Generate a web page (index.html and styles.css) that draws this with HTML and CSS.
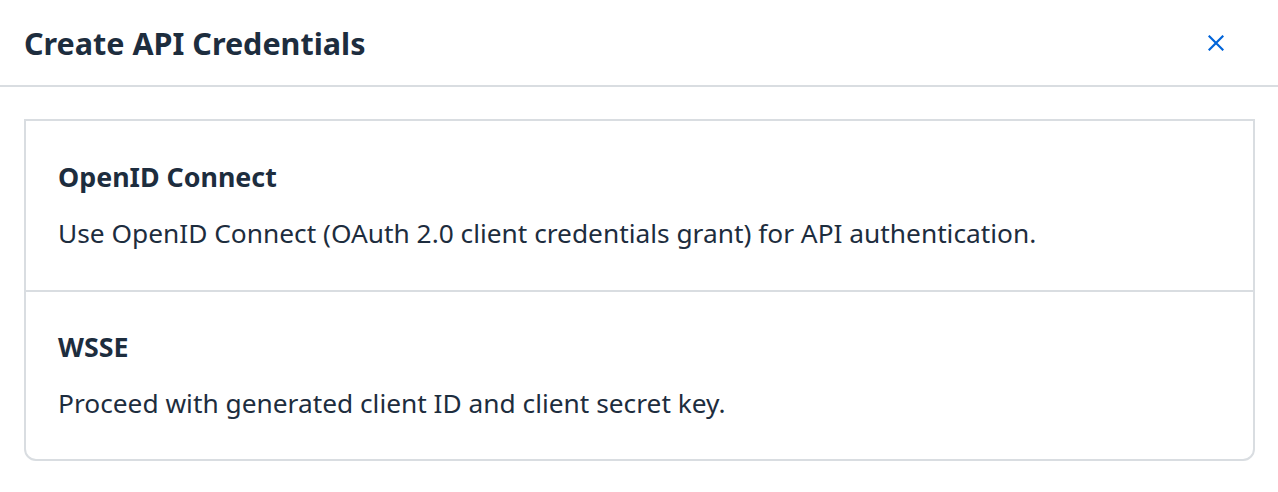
FILE: index.html
```html
<!DOCTYPE html>
<html lang="en">
<head>
<meta charset="utf-8">
<title>Create API Credentials</title>
<link rel="stylesheet" href="styles.css">
</head>
<body>
<div class="dialog">
  <header class="dialog-header">
    <h1 class="dialog-title">Create API Credentials</h1>
    <button class="close-btn" aria-label="Close">
      <svg width="16" height="16" viewBox="0 0 16 16"><path d="M1.5 1.5 L14.5 14.5 M14.5 1.5 L1.5 14.5" stroke="#0064d9" stroke-width="2.2" stroke-linecap="square" fill="none"/></svg>
    </button>
  </header>
  <div class="dialog-body">
    <ul class="option-list">
      <li class="option">
        <div class="option-title">OpenID Connect</div>
        <div class="option-desc">Use OpenID Connect (OAuth 2.0 client credentials grant) for API authentication.</div>
      </li>
      <li class="option">
        <div class="option-title">WSSE</div>
        <div class="option-desc">Proceed with generated client ID and client secret key.</div>
      </li>
    </ul>
  </div>
</div>
</body>
</html>
```
FILE: styles.css
```css
* { box-sizing: border-box; }
html, body { margin: 0; padding: 0; background: #ffffff; }
body {
  font-family: "Noto Sans", "Liberation Sans", sans-serif;
  color: #1d2d3e;
}
.dialog { width: 1278px; height: 492px; background: #fff; }
.dialog-header {
  height: 87px;
  border-bottom: 2px solid #d9dde1;
  display: flex;
  align-items: center;
  justify-content: space-between;
  padding: 0 54px 0 24px;
}
.dialog-title {
  margin: 0;
  font-size: 30.5px;
  font-weight: 700;
  line-height: 36px;
}
.close-btn {
  border: 0;
  background: transparent;
  padding: 0;
  width: 16px;
  height: 16px;
  display: flex;
}
.dialog-body { padding: 32px 23px 31px 24px; }
.option-list {
  list-style: none;
  margin: 0;
  padding: 0;
  border: 2px solid #d9dde1;
  border-radius: 0 0 12px 12px;
}
.option {
  height: 169px;
  padding: 40px 32px 0 32px;
  display: flex;
  flex-direction: column;
  gap: 24px;
}
.option + .option { border-top: 2px solid #d9dde1; height: 169px; padding-top: 39px; }
.option-title { font-size: 26.8px; font-weight: 700; line-height: 32px; }
.option-desc { font-size: 26.3px; line-height: 32px; }
```
